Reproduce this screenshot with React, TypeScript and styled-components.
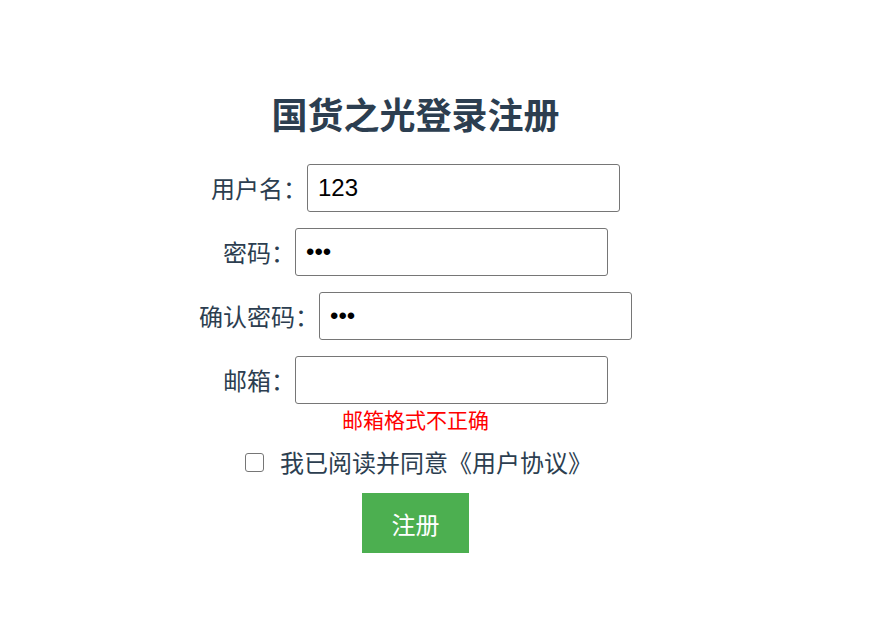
import React from "react";
import styled, { createGlobalStyle } from "styled-components";

const Global = createGlobalStyle`
  html, body { margin: 0; padding: 0; background: #fff; }
  body { font-family: "Noto Sans CJK SC", "Noto Sans", sans-serif; color: #2c3e50; }
`;

const Page = styled.div`
  width: 831px;
  padding-top: 87px;
  display: flex;
  flex-direction: column;
  align-items: center;
`;

const Title = styled.h1`
  margin: 0 0 25px;
  font-size: 36px;
  line-height: 52px;
  font-weight: 700;
  color: #2c3e50;
`;

const Form = styled.form`
  display: flex;
  flex-direction: column;
  align-items: center;
`;

const Row = styled.div`
  display: flex;
  align-items: center;
  height: 48px;
  margin-bottom: 16px;
  &:last-of-type { margin-bottom: 0; }
`;

const Label = styled.label`
  font-size: 24px;
  line-height: 48px;
  color: #2c3e50;
  white-space: nowrap;
`;

const Input = styled.input`
  box-sizing: border-box;
  width: 313px;
  height: 48px;
  padding: 0 10px;
  border: 1px solid #767676;
  border-radius: 3px;
  font-family: "Liberation Sans", Arial, sans-serif;
  font-size: 24px;
  color: #000;
  background: #fff;
  outline: none;
`;

const Error = styled.div`
  margin-top: 1px;
  font-size: 21px;
  line-height: 29px;
  color: #ff0000;
`;

const Agree = styled.div`
  margin-top: 10px;
  height: 36px;
  display: flex;
  align-items: center;
  padding-left: 6px;
`;

const Check = styled.input`
  appearance: none;
  box-sizing: border-box;
  width: 19px;
  height: 19px;
  margin: 0 16px 0 0;
  border: 1px solid #767676;
  border-radius: 3px;
  background: #fff;
`;

const AgreeText = styled.span`
  font-size: 24px;
  line-height: 36px;
  color: #2c3e50;
`;

const Submit = styled.button`
  margin-top: 13px;
  width: 107px;
  height: 60px;
  border: none;
  background: #4caf50;
  color: #fff;
  font-family: "Noto Sans CJK SC", sans-serif;
  font-size: 24px;
  cursor: pointer;
`;

export default function App() {
  return (
    <>
      <Global />
      <Page>
        <Title>国货之光登录注册</Title>
        <Form onSubmit={(e) => e.preventDefault()}>
          <Row>
            <Label>用户名：</Label>
            <Input type="text" defaultValue="123" />
          </Row>
          <Row>
            <Label>密码：</Label>
            <Input type="password" defaultValue="123" />
          </Row>
          <Row>
            <Label>确认密码：</Label>
            <Input type="password" defaultValue="123" />
          </Row>
          <Row>
            <Label>邮箱：</Label>
            <Input type="email" defaultValue="" />
          </Row>
        </Form>
        <Error>邮箱格式不正确</Error>
        <Agree>
          <Check type="checkbox" />
          <AgreeText>我已阅读并同意《用户协议》</AgreeText>
        </Agree>
        <Submit type="button">注册</Submit>
      </Page>
    </>
  );
}
